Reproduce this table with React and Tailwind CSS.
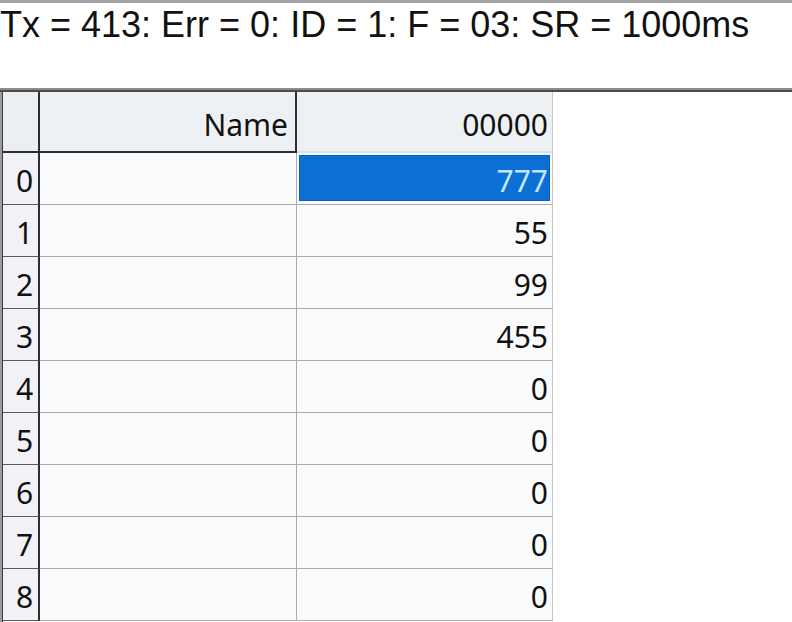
import React from "react";

const ROWS = [
  { id: 0, value: "777", selected: true },
  { id: 1, value: "55" },
  { id: 2, value: "99" },
  { id: 3, value: "455" },
  { id: 4, value: "0" },
  { id: 5, value: "0" },
  { id: 6, value: "0" },
  { id: 7, value: "0" },
  { id: 8, value: "0" },
];

const gridFont = { fontFamily: '"Noto Sans", "Open Sans", sans-serif' };

export default function App() {
  return (
    <div className="w-[792px] h-[622px] bg-white flex flex-col overflow-hidden">
      {/* status line */}
      <div className="h-[88px] shrink-0 border-t-[3px] border-[#a3a3a3] bg-white pt-[4px]">
        <div
          className="text-[36px] leading-none text-[#111] whitespace-nowrap"
          style={{ fontFamily: '"Liberation Sans", Arial, sans-serif' }}
        >
          Tx = 413: Err = 0: ID = 1: F = 03: SR = 1000ms
        </div>
      </div>
      <div className="h-[4px] shrink-0 border-t-[2px] border-[#8c8c8c] bg-[#4b4b4b]" />

      {/* grid */}
      <div className="flex flex-1 min-h-0" style={gridFont}>
        <div className="w-[3px] shrink-0 bg-[#9c9c9c] border-r border-[#3a3a3a]" />
        <div className="w-[550px] shrink-0 flex flex-col">
          <div className="flex h-[61px] shrink-0">
            <div className="w-[37px] bg-[#eceff2] border-r-[2px] border-b-[2px] border-[#2e2e2e]" />
            <div className="w-[257px] bg-[#eef1f4] border-r-[2px] border-b-[2px] border-[#2e2e2e] text-right pr-[7px] pt-[18px] text-[30px] leading-none text-[#111]">
              Name
            </div>
            <div className="w-[256px] bg-[#eef1f4] border-r border-b-[2px] border-r-[#c8c8c8] border-b-[#cfe3f2] text-right pr-[4px] pt-[18px] text-[30px] leading-none text-[#111]">
              00000
            </div>
          </div>
          {ROWS.map((row) => (
            <div key={row.id} className="flex h-[52px] shrink-0">
              <div className="w-[37px] bg-[#f0f2f5] border-r-[2px] border-b border-r-[#2e2e2e] border-b-[#5a5a5a] pl-[13px] pt-[13px] text-[30px] leading-none text-[#111]">
                {row.id}
              </div>
              <div className="w-[257px] bg-[#f9fbfd] border-r border-b border-[#ababab]" />
              <div className="w-[256px] bg-[#f9fbfd] border-r border-b border-r-[#c4c4c4] border-b-[#ababab]">
                {row.selected ? (
                  <div className="h-full px-[2px] pt-[2px] pb-[3px]">
                    <div className="h-full bg-[#0b6fd6] border border-[#0a5fb8] text-right pr-[1px] pt-[10px] text-[30px] leading-none text-[#c4e5ff]">
                      {row.value}
                    </div>
                  </div>
                ) : (
                  <div className="text-right pr-[4px] pt-[13px] text-[30px] leading-none text-[#111]">
                    {row.value}
                  </div>
                )}
              </div>
            </div>
          ))}
        </div>
        <div className="flex-1 bg-white" />
      </div>
    </div>
  );
}
